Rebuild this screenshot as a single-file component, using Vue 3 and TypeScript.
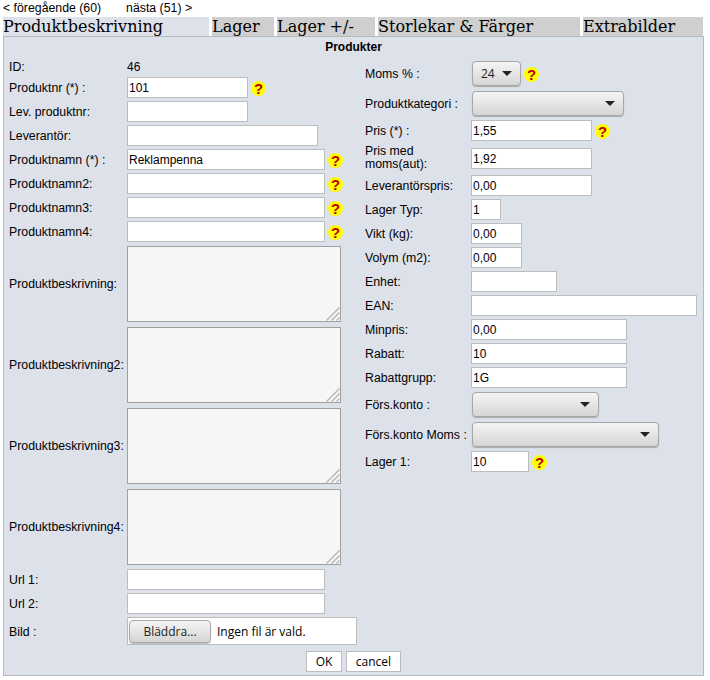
<script setup lang="ts">
interface Field { label: string; kind: 'text' | 'input' | 'area' | 'select' | 'file'; value?: string; size?: string; help?: boolean; tall?: boolean }

const tabs = [
  { name: 'Produktbeskrivning', cls: 't1 active' },
  { name: 'Lager', cls: 't2' },
  { name: 'Lager +/-', cls: 't3' },
  { name: 'Storlekar & Färger', cls: 't4' },
  { name: 'Extrabilder', cls: 't5' },
]

const left: Field[] = [
  { label: 'ID:', kind: 'text', value: '46' },
  { label: 'Produktnr (*) :', kind: 'input', value: '101', size: 'w121', help: true },
  { label: 'Lev. produktnr:', kind: 'input', size: 'w121' },
  { label: 'Leverantör:', kind: 'input', size: 'w191' },
  { label: 'Produktnamn (*) :', kind: 'input', value: 'Reklampenna', size: 'w198', help: true },
  { label: 'Produktnamn2:', kind: 'input', size: 'w198', help: true },
  { label: 'Produktnamn3:', kind: 'input', size: 'w198', help: true },
  { label: 'Produktnamn4:', kind: 'input', size: 'w198', help: true },
  { label: 'Produktbeskrivning:', kind: 'area' },
  { label: 'Produktbeskrivning2:', kind: 'area' },
  { label: 'Produktbeskrivning3:', kind: 'area' },
  { label: 'Produktbeskrivning4:', kind: 'area' },
  { label: 'Url 1:', kind: 'input', size: 'w198' },
  { label: 'Url 2:', kind: 'input', size: 'w198' },
  { label: 'Bild :', kind: 'file' },
]

const right: Field[] = [
  { label: 'Moms % :', kind: 'select', value: '24', size: 's49', help: true },
  { label: 'Produktkategori :', kind: 'select', size: 's152' },
  { label: 'Pris (*) :', kind: 'input', value: '1,55', size: 'w121', help: true },
  { label: 'Pris med moms(aut):', kind: 'input', value: '1,92', size: 'w121', tall: true },
  { label: 'Leverantörspris:', kind: 'input', value: '0,00', size: 'w121' },
  { label: 'Lager Typ:', kind: 'input', value: '1', size: 'w30' },
  { label: 'Vikt (kg):', kind: 'input', value: '0,00', size: 'w51' },
  { label: 'Volym (m2):', kind: 'input', value: '0,00', size: 'w51' },
  { label: 'Enhet:', kind: 'input', size: 'w86' },
  { label: 'EAN:', kind: 'input', size: 'w226' },
  { label: 'Minpris:', kind: 'input', value: '0,00', size: 'w156' },
  { label: 'Rabatt:', kind: 'input', value: '10', size: 'w156' },
  { label: 'Rabattgrupp:', kind: 'input', value: '1G', size: 'w156' },
  { label: 'Förs.konto :', kind: 'select', size: 's127' },
  { label: 'Förs.konto Moms :', kind: 'select', size: 's187' },
  { label: 'Lager 1:', kind: 'input', value: '10', size: 'w58', help: true },
]
</script>

<template>
  <div class="page">
    <nav class="pager">
      <a>&lt; föregående (60)</a>
      <a>nästa (51) &gt;</a>
    </nav>
    <div class="tabs">
      <div v-for="t in tabs" :key="t.name" class="tab" :class="t.cls">{{ t.name }}</div>
    </div>
    <form class="panel" @submit.prevent>
      <div class="title">Produkter</div>
      <div class="columns">
        <div class="col col-left">
          <div v-for="f in left" :key="f.label" class="row" :class="'row-' + f.kind">
            <label class="lbl">{{ f.label }}</label>
            <span v-if="f.kind === 'text'" class="static">{{ f.value }}</span>
            <input v-else-if="f.kind === 'input'" class="inp" :class="f.size" type="text" :value="f.value" />
            <div v-else-if="f.kind === 'area'" class="area-wrap">
              <textarea class="area"></textarea>
              <svg class="grip" width="15" height="15" viewBox="0 0 15 15">
                <path d="M1.5 14.5 14.5 1.5M6.5 14.5 14.5 6.5M11.5 14.5 14.5 11.5" stroke="#b4b4b4" stroke-width="1.4" fill="none" />
              </svg>
            </div>
            <div v-else-if="f.kind === 'file'" class="file">
              <button type="button" class="browse">Bläddra...</button>
              <span class="file-name">Ingen fil är vald.</span>
            </div>
            <span v-if="f.help" class="help">?</span>
          </div>
        </div>
        <div class="col col-right">
          <div v-for="f in right" :key="f.label" class="row" :class="['r-' + f.kind, { tall: f.tall }]">
            <label class="lbl lbl-r">{{ f.label }}</label>
            <input v-if="f.kind === 'input'" class="inp" :class="f.size" type="text" :value="f.value" />
            <div v-else class="sel-wrap" :class="f.size">
              <select class="sel"><option>{{ f.value }}</option></select>
            </div>
            <span v-if="f.help" class="help">?</span>
          </div>
        </div>
      </div>
      <div class="actions">
        <button type="submit" class="act">OK</button>
        <button type="button" class="act">cancel</button>
      </div>
    </form>
  </div>
</template>

<style>
html, body { margin: 0; background: #fff; }
</style>

<style scoped>
.page {
  width: 710px;
  height: 680px;
  overflow: hidden;
  font-family: "Liberation Sans", Arial, sans-serif;
  font-size: 12.3px;
  color: #000;
  box-sizing: border-box;
}
.pager {
  height: 17px;
  padding-left: 3px;
  display: flex;
  gap: 25px;
  line-height: 17px;
}
.tabs {
  display: flex;
  height: 19px;
  padding-left: 3px;
  gap: 3px;
}
.tab {
  background: #cfcfcf;
  font-family: "DejaVu Serif", serif;
  font-size: 16px;
  line-height: 19px;
  box-sizing: border-box;
  white-space: nowrap;
}
.tab.active { background: #dde1ea; }
.t1 { width: 206px; }
.t2 { width: 62px; }
.t3 { width: 98px; }
.t4 { width: 202px; }
.t5 { width: 120px; }
.panel {
  width: 701px;
  height: 640px;
  margin-left: 3px;
  background: #dde1ea;
  border: 1px solid #b9b9b9;
  box-sizing: border-box;
  position: relative;
}
.title {
  text-align: center;
  font-weight: bold;
  font-size: 12px;
  height: 22px;
  line-height: 20px;
}
.columns { display: flex; }
.col { display: flex; flex-direction: column; gap: 3px; }
.col-left { width: 361px; padding-left: 5px; box-sizing: border-box; }
.col-right { margin-top: 1px; }
.row { display: flex; align-items: center; min-height: 21px; }
.row-text { height: 15px; min-height: 15px; }
.row-area { height: 78px; }
.row-file { height: 28px; }
.r-select { height: 27px; }
.tall { height: 28px; }
.tall .inp { margin-top: 1px; }
.lbl { width: 118px; flex: none; line-height: 13px; padding-top: 2px; }
.row-area .lbl { padding-top: 0; }
.tall .lbl { padding-top: 0; margin-top: -1px; }
.lbl-r { width: 106px; }
.static { font-size: 12px; line-height: 15px; position: relative; top: 1px; }
.inp {
  height: 21px;
  border: 1px solid #bdbdbd;
  background: #fff;
  box-sizing: border-box;
  padding: 0 1px;
  font: 12px "Liberation Sans", Arial, sans-serif;
  color: #000;
  outline: none;
  flex: none;
}
.w30 { width: 30px; }
.w51 { width: 51px; }
.w58 { width: 58px; }
.w86 { width: 86px; }
.w121 { width: 121px; }
.w156 { width: 156px; }
.w191 { width: 191px; }
.w198 { width: 198px; }
.w226 { width: 226px; }
.help {
  width: 15px;
  height: 15px;
  margin-left: 3px;
  margin-top: 2px;
  border-radius: 50%;
  background: #ffff00;
  color: #c00000;
  font: bold 15px/15px "Liberation Sans", sans-serif;
  text-align: center;
  flex: none;
}
.area-wrap { position: relative; width: 214px; height: 76px; flex: none; }
.area {
  display: block;
  width: 214px;
  height: 76px;
  box-sizing: border-box;
  border: 1px solid #a0a0a0;
  background: #f6f6f6;
  resize: none;
  outline: none;
  margin: 0;
}
.grip { position: absolute; right: 1px; bottom: 1px; }
.file {
  width: 230px;
  height: 28px;
  box-sizing: border-box;
  background: #fff;
  border: 1px solid #bdbdbd;
  display: flex;
  align-items: center;
  padding-left: 1px;
  flex: none;
}
.browse {
  width: 82px;
  height: 23px;
  border: 1px solid #a8a8a8;
  border-radius: 4px;
  background: linear-gradient(#f4f4f4, #d6d6d6);
  font: 12px "Open Sans", sans-serif;
  color: #222;
  padding: 0;
  box-shadow: 0 1px 1px #bbb;
}
.file-name { margin-left: 6px; font: 12px "Open Sans", sans-serif; color: #000; }
.sel-wrap { position: relative; height: 25px; margin-left: 1px; flex: none; }
.sel-wrap::after {
  content: "";
  position: absolute;
  right: 9px;
  top: 10px;
  border-left: 5px solid transparent;
  border-right: 5px solid transparent;
  border-top: 5px solid #222;
  pointer-events: none;
}
.sel {
  appearance: none;
  display: block;
  width: 100%;
  height: 25px;
  box-sizing: border-box;
  border: 1px solid #a6a6a6;
  border-radius: 4px;
  background: linear-gradient(#f5f5f5, #d5d5d5);
  box-shadow: 0 1px 1px #aaa;
  font: 12px "Open Sans", sans-serif;
  color: #222;
  padding: 0 8px;
  outline: none;
}
.s49 { width: 49px; }
.s127 { width: 127px; }
.s152 { width: 152px; }
.s187 { width: 187px; }
.actions {
  position: absolute;
  left: 302px;
  bottom: 3px;
  display: flex;
  gap: 4px;
}
.act {
  height: 21px;
  background: #fff;
  border: 1px solid #bdbdbd;
  box-sizing: border-box;
  font: 12px "Open Sans", sans-serif;
  color: #000;
  padding: 0;
}
.act:first-child { width: 36px; }
.act:last-child { width: 55px; }
</style>
